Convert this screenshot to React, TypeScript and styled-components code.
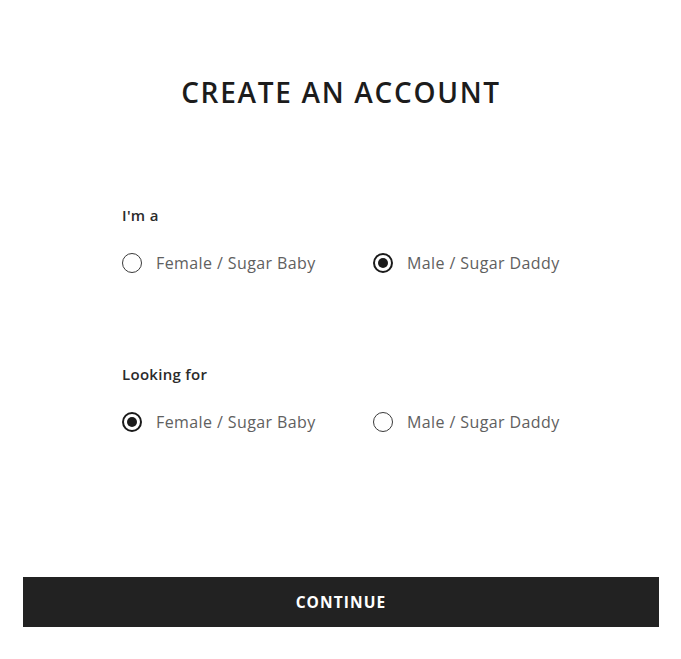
import React, { useState } from 'react';
import styled, { createGlobalStyle } from 'styled-components';

const Global = createGlobalStyle`
  body {
    margin: 0;
    background: #fff;
    font-family: "Open Sans", "Noto Sans", sans-serif;
  }
`;

const Page = styled.div`
  width: 681px;
  padding: 74px 22px 0 23px;
  box-sizing: border-box;
`;

const Title = styled.h1`
  margin: 0;
  text-align: center;
  font-size: 28px;
  line-height: 36px;
  font-weight: 600;
  letter-spacing: 1.7px;
  color: #1c1c1c;
`;

const Group = styled.div<{ $top: number }>`
  margin-top: ${({ $top }) => $top}px;
  padding-left: 99px;
`;

const Label = styled.div`
  font-size: 15px;
  line-height: 20px;
  font-weight: 600;
  letter-spacing: 0.3px;
  color: #2b2b2b;
`;

const Options = styled.div`
  margin-top: 26px;
  display: grid;
  grid-template-columns: 251px auto;
`;

const Option = styled.label`
  display: flex;
  align-items: center;
  gap: 14px;
  height: 24px;
  cursor: pointer;
  font-size: 16px;
  letter-spacing: 0.4px;
  color: #606060;
`;

const Circle = styled.span<{ $on: boolean }>`
  width: 20px;
  height: 20px;
  box-sizing: border-box;
  border-radius: 50%;
  border: ${({ $on }) => ($on ? '2px solid #1a1a1a' : '1.5px solid #3a3a3a')};
  display: flex;
  align-items: center;
  justify-content: center;
  &::after {
    content: '';
    width: 10px;
    height: 10px;
    border-radius: 50%;
    background: #1a1a1a;
    display: ${({ $on }) => ($on ? 'block' : 'none')};
  }
`;

const Button = styled.button`
  display: block;
  width: 636px;
  height: 50px;
  margin-top: 143px;
  border: none;
  background: #222;
  color: #fff;
  font-family: "Open Sans", "Noto Sans", sans-serif;
  font-size: 15.5px;
  font-weight: 700;
  letter-spacing: 1.1px;
  cursor: pointer;
`;

const choices = ['Female / Sugar Baby', 'Male / Sugar Daddy'];

function RadioGroup({ label, top, value, onChange }: { label: string; top: number; value: number; onChange: (i: number) => void }) {
  return (
    <Group $top={top}>
      <Label>{label}</Label>
      <Options>
        {choices.map((c, i) => (
          <Option key={c} onClick={() => onChange(i)}>
            <Circle $on={value === i} />
            {c}
          </Option>
        ))}
      </Options>
    </Group>
  );
}

export default function App() {
  const [me, setMe] = useState(1);
  const [seek, setSeek] = useState(0);

  return (
    <Page>
      <Global />
      <Title>CREATE AN ACCOUNT</Title>
      <RadioGroup label="I'm a" top={95} value={me} onChange={setMe} />
      <RadioGroup label="Looking for" top={89} value={seek} onChange={setSeek} />
      <Button>CONTINUE</Button>
    </Page>
  );
}
